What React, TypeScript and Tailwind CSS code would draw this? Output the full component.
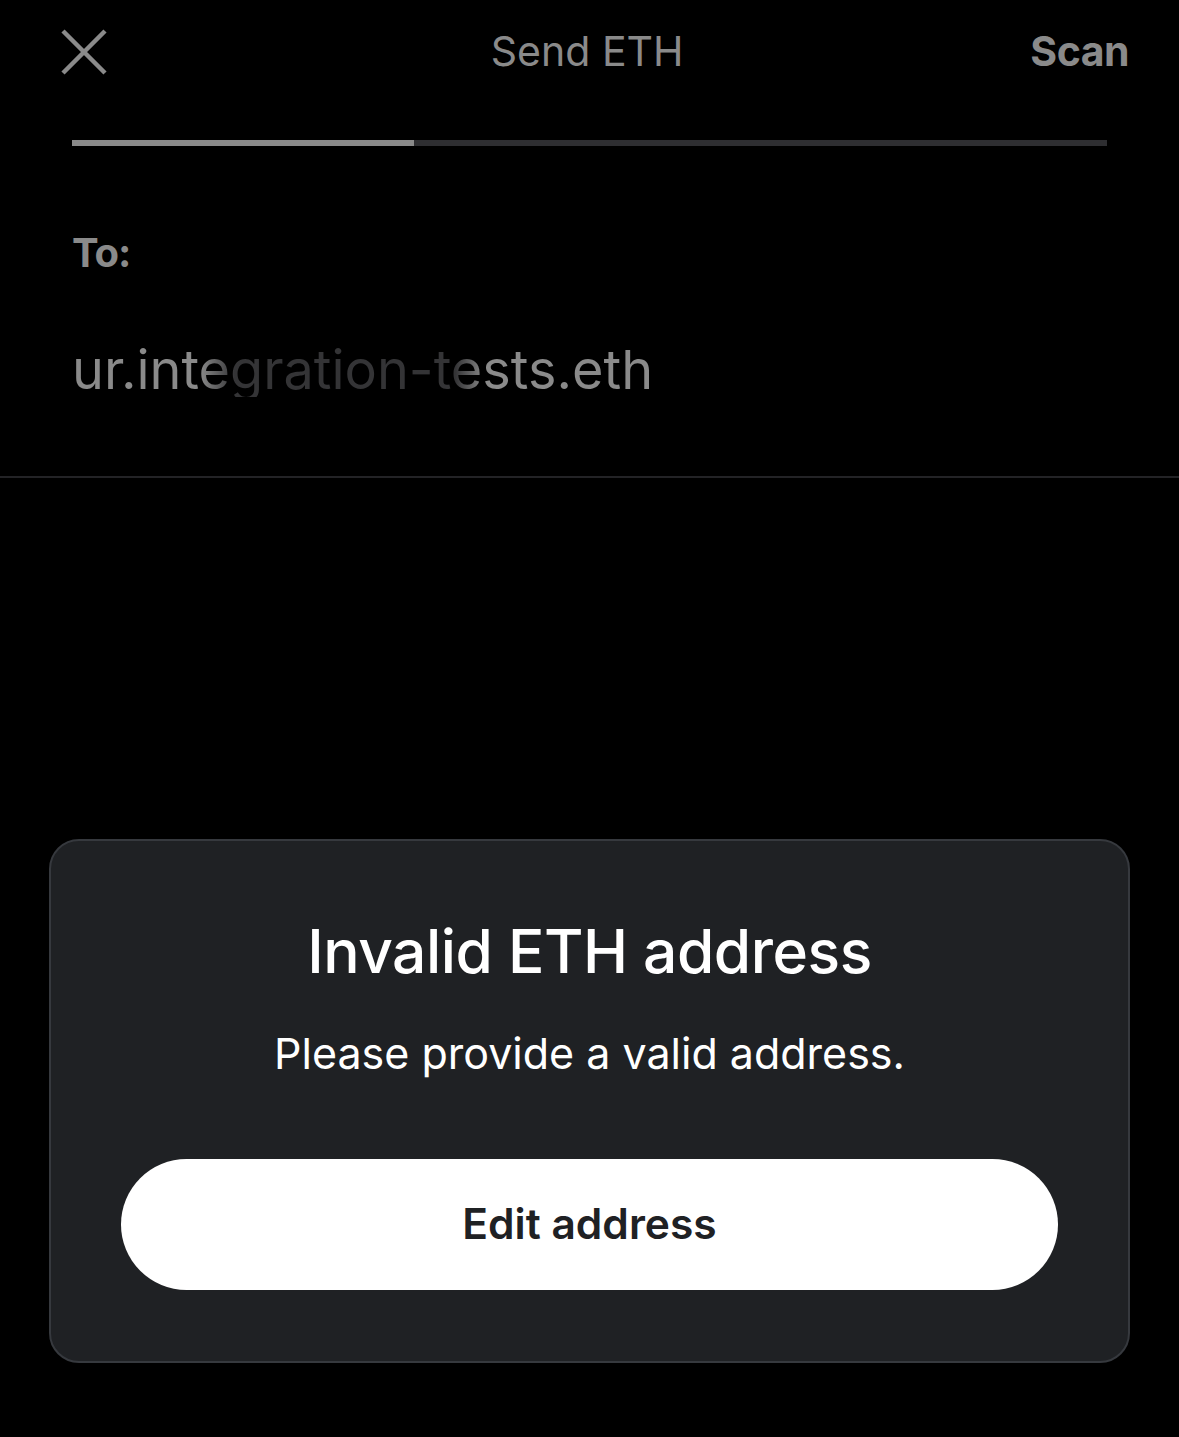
export default function App() {
  return (
    <div className="min-h-[1437px] w-full bg-black font-['Inter','Noto_Sans',sans-serif] flex flex-col">
      {/* Header */}
      <div className="flex items-center justify-between h-[104px] pl-[60px] pr-[50px]">
        <svg width="48" height="48" viewBox="0 0 48 48" className="shrink-0">
          <path d="M3 3 L45 45 M45 3 L3 45" stroke="#8a8a8a" strokeWidth="4.5" strokeLinecap="butt" />
        </svg>
        <div className="text-[41px] text-[#8a8a8a] tracking-[0px] pl-[36px]">Send ETH</div>
        <div className="text-[41px] font-bold text-[#8a8a8a] tracking-[-0.5px]">Scan</div>
      </div>

      {/* Progress */}
      <div className="mx-[72px] mt-[36px] h-[6px] flex">
        <div className="w-[33%] bg-[#8a8a8a]" />
        <div className="flex-1 bg-[#2e2e31]" />
      </div>

      {/* Recipient */}
      <div className="px-[72px] pt-[87px] pb-[79px] border-b-2 border-[#232326]">
        <div className="text-[40px] font-bold text-[#8a8a8a] leading-none tracking-[-1px]">To:</div>
        <div
          className="mt-[70px] text-[54px] leading-none tracking-[0px] bg-clip-text text-transparent w-fit"
          style={{
            backgroundImage:
              "linear-gradient(90deg, #8a8a8a 0%, #8a8a8a 22%, #343436 28%, #343436 66%, #8a8a8a 71%, #8a8a8a 100%)",
          }}
        >
          ur.integration-tests.eth
        </div>
      </div>

      {/* Dialog */}
      <div className="flex-1 flex flex-col justify-end px-[49px] pb-[74px]">
        <div className="bg-[#1f2124] border-2 border-[#36393e] rounded-[30px] h-[524px] flex flex-col items-center pt-[80px] px-[70px]">
          <div className="text-[60.5px] font-medium text-white leading-none tracking-[-0.5px]">Invalid ETH address</div>
          <div className="mt-[50px] text-[43px] text-white leading-none">Please provide a valid address.</div>
          <button className="mt-[84px] w-full h-[131px] rounded-full bg-white text-[#1f2124] text-[42.5px] font-semibold">
            Edit address
          </button>
        </div>
      </div>
    </div>
  );
}
